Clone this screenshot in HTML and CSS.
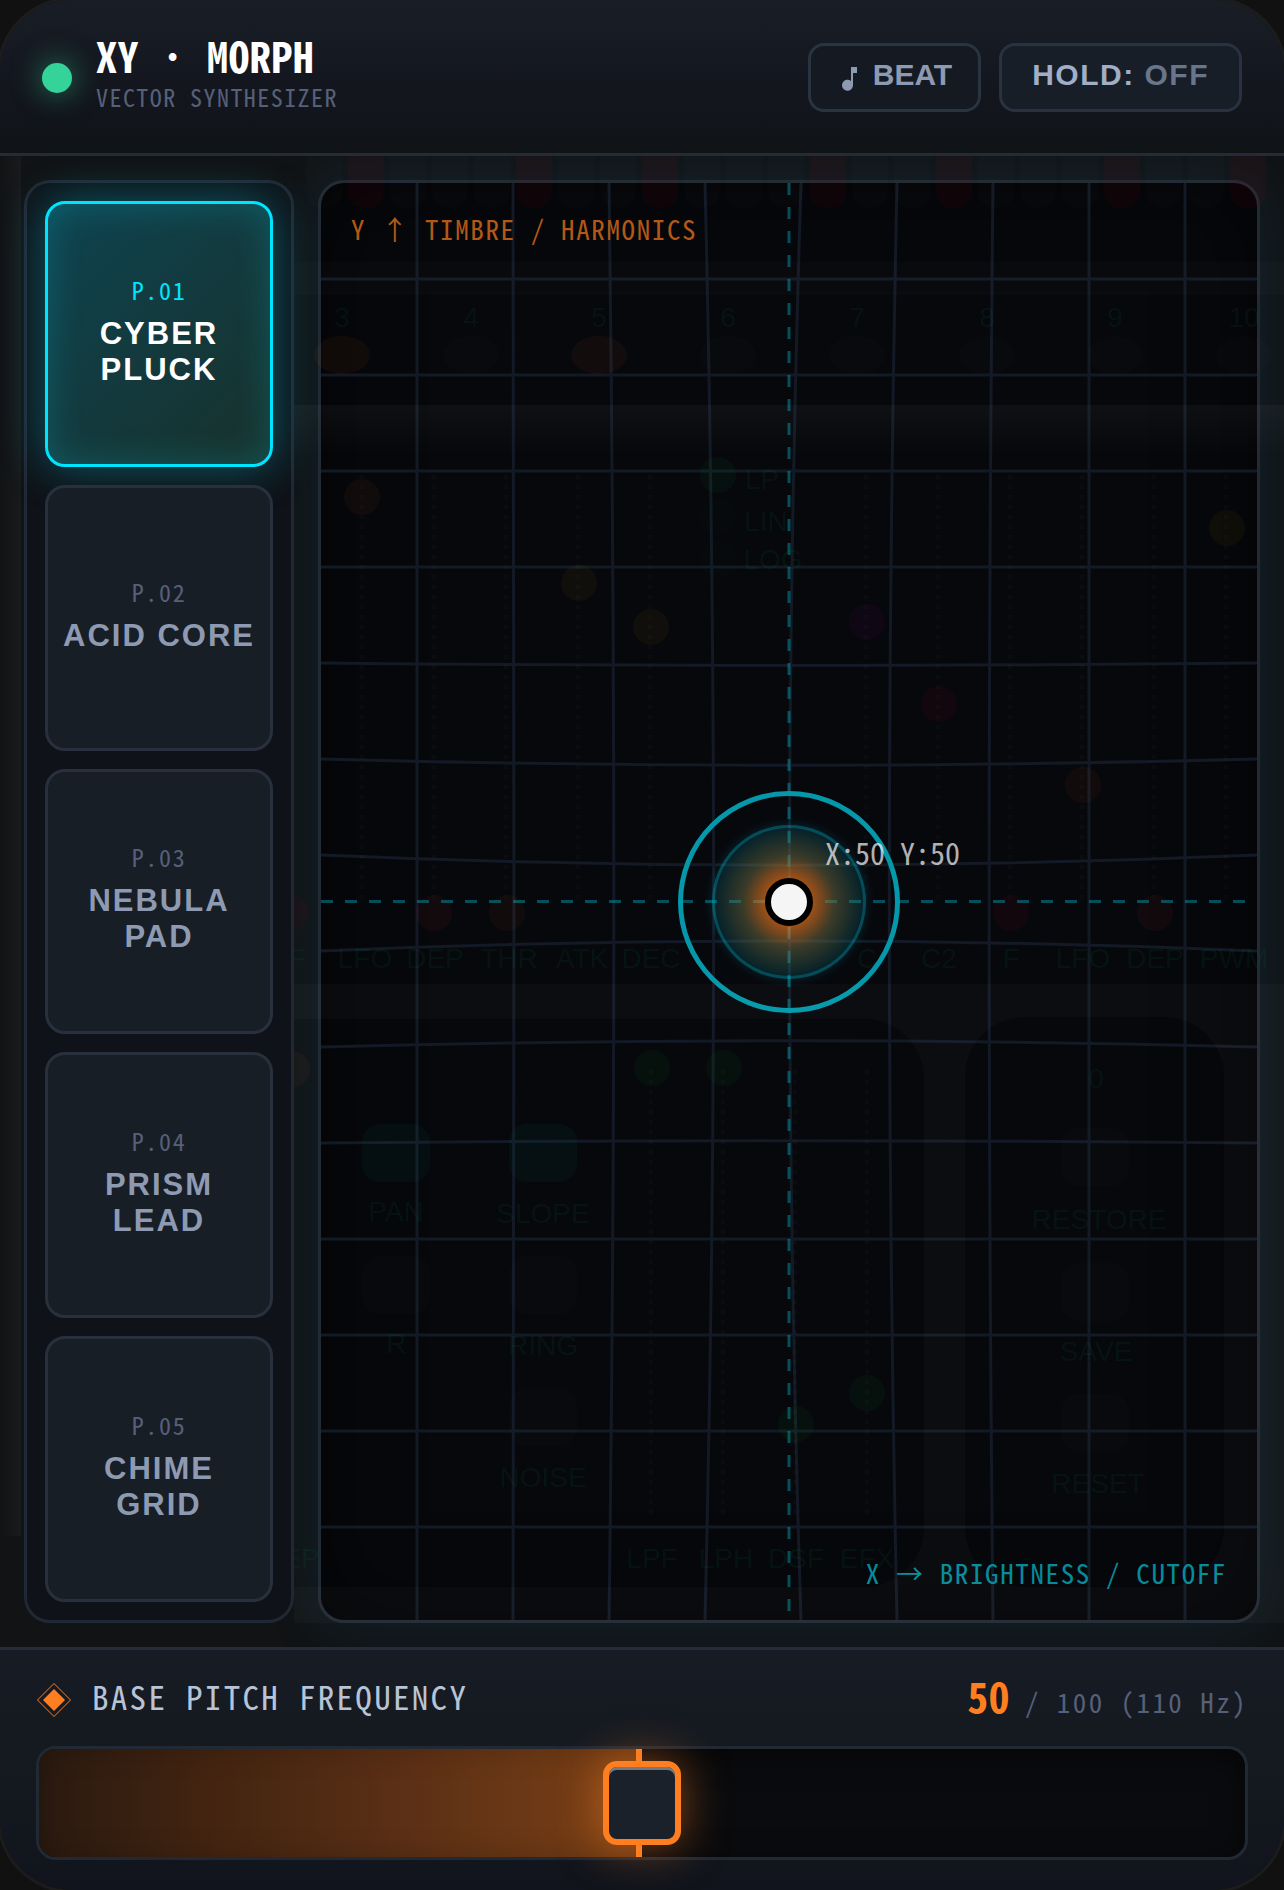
FILE: index.html
```html
<!DOCTYPE html>
<html lang="en">
<head>
    <meta charset="UTF-8">
    <meta name="viewport" content="width=device-width, initial-scale=1.0">
    <title>XY Morph</title>
    <link rel="stylesheet" href="styles.css">
</head>
<body>
    <div class="device">
        <!-- Header -->
        <header class="topbar">
            <div class="brand">
                <span class="led"></span>
                <div class="brand-text">
                    <h1>XY · MORPH</h1>
                    <p>VECTOR SYNTHESIZER</p>
                </div>
            </div>
            <div class="actions">
                <button class="btn btn-beat" type="button">
                    <svg class="note" viewBox="0 0 16 24" aria-hidden="true">
                        <path d="M10 0h6v6h-4v12.500a5.500 5.500 0 1 1-2-4.500z" />
                    </svg>
                    BEAT
                </button>
                <button class="btn btn-hold" type="button">HOLD: <span>OFF</span></button>
            </div>
        </header>

        <!-- Presets and pad -->
        <main class="stage">
            <nav class="presets">
                <button class="preset active" type="button"><small>P.01</small><b>CYBER PLUCK</b></button>
                <button class="preset" type="button"><small>P.02</small><b>ACID CORE</b></button>
                <button class="preset" type="button"><small>P.03</small><b>NEBULA PAD</b></button>
                <button class="preset" type="button"><small>P.04</small><b>PRISM LEAD</b></button>
                <button class="preset" type="button"><small>P.05</small><b>CHIME GRID</b></button>
            </nav>

            <div class="pad" id="pad">
                <svg class="grid" id="grid" aria-hidden="true"></svg>
                <span class="axis axis-y">Y ↑ TIMBRE / HARMONICS</span>
                <span class="axis axis-x">X → BRIGHTNESS / CUTOFF</span>
                <div class="puck">
                    <span class="halo"></span>
                    <span class="ring"></span>
                    <span class="core"></span>
                    <span class="readout">X:50 Y:50</span>
                </div>
            </div>

            <!-- Faint hardware panel showing through the glass -->
            <svg class="ghost" viewBox="0 156 1284 1491" preserveAspectRatio="none" aria-hidden="true">
                <defs>
                    <linearGradient id="band" x1="0" y1="0" x2="0" y2="1">
                        <stop offset="0" stop-color="#fff" stop-opacity=".035" />
                        <stop offset="1" stop-color="#fff" stop-opacity="0" />
                    </linearGradient>
                    <linearGradient id="edge">
                        <stop offset="0" stop-color="#fff" stop-opacity="0" />
                        <stop offset="1" stop-color="#fff" stop-opacity=".03" />
                    </linearGradient>
                </defs>
                <rect x="0" y="156" width="21" height="1380" fill="url(#edge)" />
                <rect x="294" y="262" width="990" height="33" fill="#fff" fill-opacity=".015" />
                <rect x="294" y="405" width="990" height="50" fill="url(#band)" />
                <path class="frame" fill-rule="evenodd" d="M294 984H1284V1623H294zM294 1019H864a60 60 0 0 1 60 60V1527a60 60 0 0 1-60 60H294zM1025 1017h139a60 60 0 0 1 60 60V1527a60 60 0 0 1-60 60H1025a60 60 0 0 1-60-60V1077a60 60 0 0 1 60-60z" />
                <g id="ghost-keys"></g>
                <g id="ghost-tracks"></g>
                <g class="lamps">
                    <ellipse cx="342" cy="355" rx="28" ry="19" fill="#ff7a1a" />
                    <ellipse cx="471" cy="355" rx="28" ry="19" fill="#a0b0b8" opacity=".4" />
                    <ellipse cx="599" cy="355" rx="28" ry="19" fill="#ff7a1a" />
                    <ellipse cx="728" cy="355" rx="28" ry="19" fill="#a0b0b8" opacity=".4" />
                    <ellipse cx="857" cy="355" rx="28" ry="19" fill="#a0b0b8" opacity=".4" />
                    <ellipse cx="987" cy="355" rx="28" ry="19" fill="#a0b0b8" opacity=".4" />
                    <ellipse cx="1115" cy="355" rx="28" ry="19" fill="#a0b0b8" opacity=".4" />
                    <ellipse cx="1244" cy="355" rx="28" ry="19" fill="#a0b0b8" opacity=".4" />
                    <circle cx="362" cy="497" r="18" fill="#ff7a3a" />
                    <circle cx="579" cy="583" r="18" fill="#e0a000" />
                    <circle cx="651" cy="627" r="18" fill="#e0a000" />
                    <circle cx="867" cy="622" r="18" fill="#c000a0" />
                    <circle cx="939" cy="704" r="18" fill="#e00030" />
                    <circle cx="1083" cy="785" r="18" fill="#ff5a1a" />
                    <circle cx="1227" cy="528" r="18" fill="#e0a000" />
                    <circle cx="290" cy="913" r="18" fill="#e00030" />
                    <circle cx="434" cy="913" r="18" fill="#ff4a1a" />
                    <circle cx="507" cy="913" r="18" fill="#e07000" />
                    <circle cx="1011" cy="913" r="18" fill="#e00030" />
                    <circle cx="1155" cy="913" r="18" fill="#ff4a1a" />
                    <circle cx="292" cy="1069" r="18" fill="#e08040" />
                    <circle cx="718" cy="475" r="18" fill="#00c040" />
                    <circle cx="718" cy="517" r="18" fill="#00c040" opacity=".4" />
                    <circle cx="718" cy="559" r="18" fill="#00c040" opacity=".4" />
                    <circle cx="652" cy="1068" r="18" fill="#00c020" />
                    <circle cx="724" cy="1068" r="18" fill="#00c020" />
                    <circle cx="796" cy="1424" r="18" fill="#00c020" />
                    <circle cx="867" cy="1393" r="18" fill="#00c020" />
                    <rect x="362" y="1124" width="68" height="58" rx="18" fill="#00b090" />
                    <rect x="509" y="1124" width="68" height="58" rx="18" fill="#00b090" />
                    <rect x="362" y="1256" width="68" height="58" rx="18" fill="#a0b0b0" opacity=".4" />
                    <rect x="509" y="1256" width="68" height="58" rx="18" fill="#a0b0b0" opacity=".4" />
                    <rect x="509" y="1388" width="68" height="58" rx="18" fill="#a0b0b0" opacity=".4" />
                    <rect x="1061" y="1128" width="68" height="58" rx="18" fill="#a0b0b0" opacity=".4" />
                    <rect x="1061" y="1263" width="68" height="58" rx="18" fill="#a0b0b0" opacity=".4" />
                    <rect x="1061" y="1394" width="68" height="58" rx="18" fill="#a0b0b0" opacity=".4" />
                </g>
                <g class="ghost-text" id="ghost-text"></g>
            </svg>
        </main>

        <!-- Pitch slider -->
        <footer class="pitch">
            <div class="pitch-row">
                <label class="pitch-label" for="pitch">
                    <svg class="diamond" viewBox="0 0 36 40" aria-hidden="true">
                        <path d="M18 3.500 34.500 20 18 36.500 1.500 20z" fill="none" stroke="currentColor" />
                        <path d="M18 9 29 20 18 31 7 20z" fill="currentColor" />
                    </svg>
                    BASE PITCH FREQUENCY
                </label>
                <output class="pitch-value" for="pitch"><b>50</b><span>/ 100 (110 Hz)</span></output>
            </div>
            <div class="track">
                <div class="fill" style="width: 50%"></div>
                <input type="range" id="pitch" min="0" max="100" value="50">
            </div>
        </footer>
    </div>

    <script src="script.js"></script>
</body>
</html>
```
FILE: styles.css
```css
* {
    box-sizing: border-box;
    margin: 0;
    padding: 0;
}

:root {
    --cyan: #00e5ff;
    --orange: #ff7f20;
    --line: #242c37;
    --mono: "Noto Sans Mono CJK KR", "Noto Sans Mono CJK SC", "Liberation Mono", monospace;
    --sans: "Liberation Sans", Arial, sans-serif;
}

body {
    background: #111111;
    font-family: var(--sans);
}

.device {
    display: flex;
    flex-direction: column;
    min-height: 100vh;
    border-radius: 72px;
    overflow: hidden;
    box-shadow: 0 0 0 3px #1c1c1c;
}

/* Header */
.topbar {
    display: flex;
    justify-content: space-between;
    align-items: center;
    padding: 31px 42px 29px;
    background: linear-gradient(#191e26, #14171f 50%, #101316);
    border-bottom: 3px solid var(--line);
}

.brand {
    display: flex;
    align-items: center;
    gap: 24px;
}

.led {
    width: 30px;
    height: 30px;
    border-radius: 50%;
    background: #34d399;
    box-shadow: 0 0 30px rgba(52, 211, 153, 0.6);
}

.brand-text {
    margin-bottom: 9px;
    font-family: var(--mono);
}

.brand-text h1 {
    font-size: 42px;
    line-height: 48px;
    letter-spacing: 0.01em;
    color: #ffffff;
}

.brand-text p {
    font-size: 24px;
    line-height: 36px;
    letter-spacing: 0.06em;
    color: #56607a;
}

.actions {
    display: flex;
    gap: 18px;
}

.btn {
    display: flex;
    align-items: center;
    height: 69px;
    padding: 0 30px 6px;
    border: 3px solid #2a3340;
    border-radius: 16px;
    background: #151a22;
    font: bold 30px var(--sans);
    color: #8e9ab2;
    cursor: pointer;
}

.btn-beat {
    gap: 16px;
    padding-right: 26px;
}

.btn-hold {
    background: #181e28;
    border-color: #2a3242;
    color: #a0aec6;
    letter-spacing: 0.05em;
    white-space: pre;
}

.btn-hold span {
    color: #67768a;
}

.note {
    width: 16px;
    height: 24px;
    margin-top: 8px;
    fill: currentColor;
}

/* Presets and pad */
.stage {
    position: relative;
    flex: 1;
    display: flex;
    gap: 24px;
    padding: 24px;
    background: #111315;
    overflow: hidden;
}

.presets {
    position: relative;
    z-index: 2;
    flex: 0 0 270px;
    display: flex;
    flex-direction: column;
    gap: 18px;
    padding: 18px;
    border: 3px solid #202833;
    border-radius: 26px;
    background: #0f1218;
}

.preset {
    flex: 1;
    display: flex;
    flex-direction: column;
    align-items: center;
    justify-content: center;
    gap: 18px;
    padding: 2px 12px 0;
    border: 3px solid #28303d;
    border-radius: 20px;
    background: #181e26;
    color: #8e9ab2;
    cursor: pointer;
}

.preset small {
    font: 24px/16px var(--mono);
    letter-spacing: 0.07em;
    color: #56607a;
}

.preset b {
    font: bold 31px/36px var(--sans);
    letter-spacing: 2px;
}

.preset.active {
    border-color: var(--cyan);
    background: linear-gradient(135deg, #0e4350, #18312c);
    box-shadow: 0 0 45px rgba(0, 229, 255, 0.35), inset 0 0 36px rgba(0, 229, 255, 0.2);
    color: #ffffff;
}

.preset.active small {
    color: var(--cyan);
}

.pad {
    position: relative;
    flex: 1;
    border: 3px solid #222a34;
    border-radius: 26px;
    background: #07080c;
    box-shadow: 0 0 60px rgba(20, 120, 160, 0.16), inset 0 0 90px rgba(0, 0, 0, 0.6);
}

.grid {
    position: absolute;
    inset: 0;
    width: 100%;
    height: 100%;
    border-radius: 23px;
}

.grid path {
    fill: none;
    stroke: #131a25;
    stroke-width: 3;
}

.grid .cross {
    stroke: rgba(0, 229, 255, 0.32);
    stroke-dasharray: 12;
}

.axis {
    position: absolute;
    font: 27px/30px var(--mono);
    letter-spacing: 0.06em;
}

.axis-y {
    top: 31px;
    left: 30px;
    color: #b45816;
}

.axis-x {
    right: 30px;
    bottom: 32px;
    color: #058c9b;
}

.puck {
    position: absolute;
    top: 50%;
    left: 50%;
}

.puck span {
    position: absolute;
}

.halo,
.ring,
.core {
    transform: translate(-50%, -50%);
    border-radius: 50%;
}

.halo {
    width: 154px;
    height: 154px;
    border: 3px solid rgba(0, 229, 255, 0.22);
    background: radial-gradient(circle closest-side, rgba(255, 127, 32, 0.65) 0%, rgba(255, 127, 32, 0.6) 33%, rgba(110, 110, 70, 0.5) 62%, rgba(0, 140, 160, 0.2) 100%);
    box-shadow: 0 0 12px rgba(0, 229, 255, 0.15);
}

.ring {
    width: 222px;
    height: 222px;
    border: 5px solid #0498aa;
}

.core {
    width: 48px;
    height: 48px;
    border: 6px solid #000000;
    background: #f5f5f5;
}

.puck .readout {
    left: 36px;
    bottom: 35px;
    font: 30px/30px var(--mono);
    color: rgba(255, 255, 255, 0.7);
    white-space: nowrap;
}

.ghost {
    position: absolute;
    inset: 0;
    z-index: 1;
    width: 100%;
    height: 100%;
    pointer-events: none;
}

.frame {
    fill: rgba(255, 255, 255, 0.025);
}

.lamps {
    opacity: 0.05;
}

.ghost-text {
    font: 28px var(--sans);
    text-anchor: middle;
    fill: rgba(0, 130, 70, 0.1);
}

/* Pitch slider */
.pitch {
    padding: 30px 36px;
    border-top: 3px solid var(--line);
    background: linear-gradient(#171b23, #151a21 40%, #11141c);
}

.pitch-row {
    display: flex;
    justify-content: space-between;
    align-items: flex-start;
    height: 42px;
    margin-bottom: 24px;
    font-family: var(--mono);
}

.pitch-label {
    display: flex;
    align-items: flex-start;
    gap: 20px;
    font-size: 33px;
    line-height: 32px;
    letter-spacing: 0.07em;
    color: #b8c4d6;
}

.diamond {
    width: 36px;
    height: 40px;
    color: var(--orange);
}

.pitch-value {
    display: flex;
    align-items: baseline;
    gap: 15px;
    font-size: 27px;
    line-height: 30px;
    letter-spacing: 0.09em;
    color: #56607a;
}

.pitch-value b {
    font-size: 42px;
    letter-spacing: 0.01em;
    color: var(--orange);
}

.track {
    position: relative;
    height: 114px;
    border: 3px solid #212934;
    border-radius: 20px;
    background: #0a0b0e;
    box-shadow: inset 0 6px 30px rgba(0, 0, 0, 0.5);
}

.fill {
    height: 100%;
    border-right: 6px solid var(--orange);
    border-radius: 17px 0 0 17px;
    background: linear-gradient(90deg, #2a1a10, #402310 25%, #5a2f15 60%, #7a4016);
    box-shadow: inset 0 0 30px rgba(0, 0, 0, 0.2);
}

.track input {
    position: absolute;
    inset: 0;
    width: 100%;
    height: 100%;
    appearance: none;
    background: none;
    cursor: pointer;
}

.track input::-webkit-slider-thumb {
    appearance: none;
    width: 78px;
    height: 84px;
    border: 6px solid var(--orange);
    border-radius: 14px;
    background: #1a212b;
    box-shadow: 0 0 45px rgba(255, 127, 32, 0.5), inset 0 3px 0 rgba(255, 255, 255, 0.4);
}
```
FILE: script.js
```js
const SVG_NS = 'http://www.w3.org/2000/svg';
const pad = document.getElementById('pad');
const grid = document.getElementById('grid');
const STEP = 96;   // grid cell size
const REACH = 300; // how far the puck bends the lines
const PULL = 24;

function add(parent, tag, attrs) {
    const el = document.createElementNS(SVG_NS, tag);
    for (const name in attrs) {
        el.setAttribute(name, attrs[name]);
    }
    parent.appendChild(el);
    return el;
}

// Control point offset for a line at pos, pulled toward center
function bend(pos, center) {
    const dist = Math.abs(center - pos);
    return dist < REACH ? Math.sign(center - pos) * PULL * (1 - dist / REACH) : 0;
}

function drawGrid() {
    const w = pad.clientWidth;
    const h = pad.clientHeight;
    const cx = w / 2;
    const cy = h / 2;
    grid.innerHTML = '';

    for (let x = STEP; x < w; x += STEP) {
        add(grid, 'path', { d: `M${x} 0Q${x + bend(x, cx)} ${cy} ${x} ${h}` });
    }
    for (let y = STEP; y < h; y += STEP) {
        add(grid, 'path', { d: `M0 ${y}Q${cx} ${y + bend(y, cy)} ${w} ${y}` });
    }
    add(grid, 'path', { class: 'cross', d: `M${cx} 0V${h}` });
    add(grid, 'path', { class: 'cross', d: `M0 ${cy}H${w}` });
}

// Keyboard and slider tracks of the faint panel
function drawGhost() {
    const keys = document.getElementById('ghost-keys');
    const red = [1, 5, 8, 12, 15, 19, 22];
    for (let i = 0; i < 23; i++) {
        add(keys, 'rect', {
            x: 306 + i * 42, y: 130, width: 36, height: 78, rx: 16,
            fill: red.includes(i) ? '#ff0010' : '#ffffff',
            'fill-opacity': red.includes(i) ? 0.045 : 0.013
        });
    }

    const tracks = document.getElementById('ghost-tracks');
    for (let i = 0; i < 13; i++) {
        if (i === 5 || i === 6) continue;
        add(tracks, 'path', { d: `M${362 + i * 72} 475V905`, stroke: '#fff', 'stroke-opacity': 0.02, 'stroke-width': 4, 'stroke-dasharray': '4 6' });
    }
    [651, 723, 795, 867].forEach(x => {
        add(tracks, 'path', { d: `M${x} 1070V1520`, stroke: '#fff', 'stroke-opacity': 0.02, 'stroke-width': 4, 'stroke-dasharray': '4 6' });
    });

    const labels = [
        ['3', 342, 327], ['4', 471, 327], ['5', 599, 327], ['6', 728, 327],
        ['7', 857, 327], ['8', 987, 327], ['9', 1115, 327], ['10', 1244, 327],
        ['LP', 762, 489], ['LIN', 766, 531], ['LOG', 773, 569],
        ['F', 297, 968], ['LFO', 365, 968], ['DEP', 435, 968], ['THR', 509, 968],
        ['ATK', 582, 968], ['DEC', 651, 968], ['C', 867, 968], ['C2', 939, 968],
        ['F', 1011, 968], ['LFO', 1083, 968], ['DEP', 1155, 968], ['PWM', 1234, 968],
        ['0', 1096, 1088], ['PAN', 396, 1221], ['SLOPE', 543, 1223], ['RESTORE', 1099, 1229],
        ['R', 396, 1353], ['RING', 543, 1355], ['SAVE', 1096, 1361],
        ['NOISE', 543, 1487], ['RESET', 1098, 1493],
        ['EP', 301, 1568], ['LPF', 652, 1568], ['LPH', 726, 1568], ['DSF', 796, 1568], ['EFX', 867, 1568]
    ];
    const text = document.getElementById('ghost-text');
    labels.forEach(([label, x, y]) => {
        add(text, 'text', { x, y }).textContent = label;
    });
}

drawGrid();
drawGhost();
window.addEventListener('resize', drawGrid);
```
